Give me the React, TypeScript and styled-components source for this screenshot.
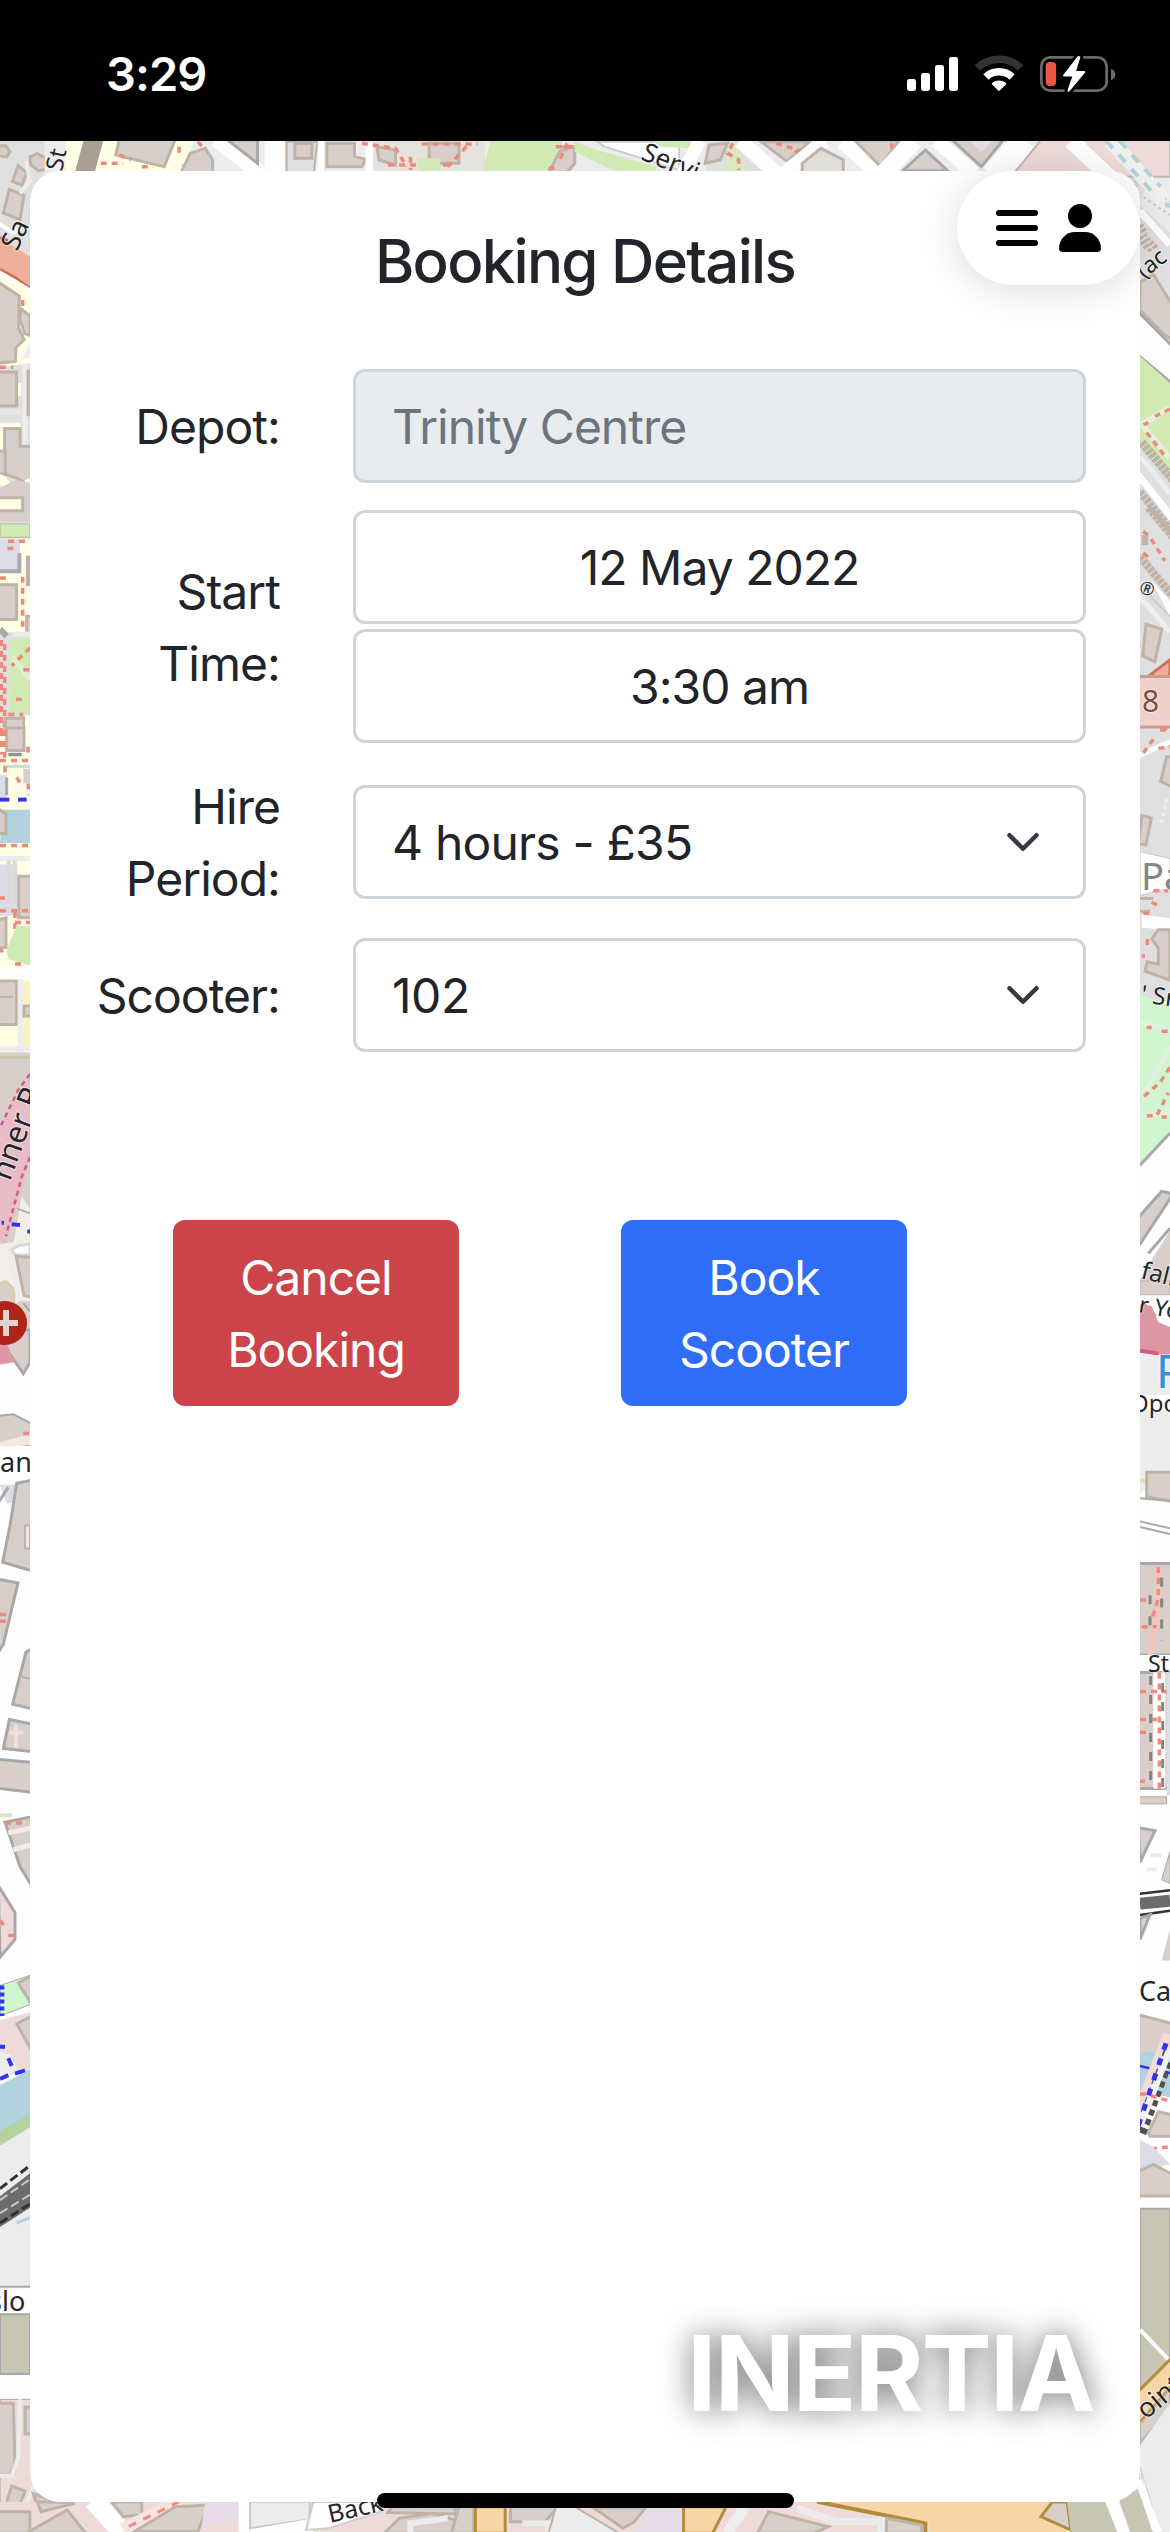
import React from 'react';
import styled, { createGlobalStyle } from 'styled-components';

const GlobalStyle = createGlobalStyle`
  *, *::before, *::after { box-sizing: border-box; }
  html, body { margin: 0; padding: 0; background: #000; }
  body { font-family: Inter, "Liberation Sans", sans-serif; color: #212529; -webkit-font-smoothing: antialiased; }
`;

/* ---------- map artwork ---------- */

const C = {
  land: '#dfdfdf', light: '#ececec', block: '#d8cfca', edge: '#bfb3a8', grey: '#a9a8a6', yellow: '#ffffe6',
  green: '#d1e9b3', mint: '#cff6cf', water: '#b2d2de', salmon: '#eeb09d', retail: '#eedad9', pinkRoad: '#e8bcc7',
  rose: '#dd97a3', roseEdge: '#d35c86', path: '#ee897b', cycle: '#3232f2', lilac: '#dcdce6', cream: '#f1eee9',
  olive: '#c6c6b3', orange: '#f6d6a7', orangeEdge: '#b28c3c', purple: '#e8dbe8', white: '#fefefe', dark: '#6c6c6c',
};

type Shape = { d: string; f?: string; s?: string; w?: number; dash?: string };
const area = (d: string, f: string, s?: string, w = 3): Shape => ({ d: `M${d}Z`, f, s, w });
const line = (d: string, s: string, w = 3, dash?: string): Shape => ({ d: `M${d}`, s, w, dash });
const foot = (d: string) => line(d, C.path, 3.5, '6 5');

type Sheet = { x: number; y: number; sx: number; sy: number; shapes: Shape[] };

const sheets: Sheet[] = [
  { x: 0, y: 130, sx: 3, sy: 2.529, shapes: [
    area('0 25H180V1568H0', C.land),
    area('90 68L112 60 155 80 150 98 115 103 92 88', C.block, C.edge),
    area('-4 40L18 40 30 55 20 68 -4 65', C.block, C.edge),
    area('54 90L80 108 66 140 38 130', C.block, C.edge), area('28 150L72 165 60 226 10 210', C.block, C.edge),
    line('78 80L90 130 60 160', C.light, 4), line('-5 235L40 260 62 245', C.white, 4),
    area('-5 270L90 320V400L0 355', C.salmon), line('0 272L24 280', '#cf6a4e', 3), line('0 352L50 375 90 400', '#cf6a4e', 2.5),
    area('0 355L90 400V590L0 600', C.yellow), line('0 364L45 382 90 405', C.white, 3),
    area('-5 385L58 420 56 500 72 530 48 550 46 585 -5 590', C.block, C.edge),
    area('62 452L90 470V520L75 515 60 480', C.block, C.edge), foot('68 430V450'),
    area('90 540V575L65 582', C.light), foot('0 600H40'), area('-5 612H50V698H-5', C.block, C.edge),
    area('54 640H64V672H54', C.yellow), line('75 590V800', C.light, 5), area('84 610H94V720H84', C.block, C.edge),
    line('0 714H64', '#e6e6e6', 6), area('0 740H62V752H0', C.yellow), area('0 755H16V820H0', C.yellow),
    area('14 755H60V800H95V895L70 890 50 880 14 870', C.block, C.edge), area('-5 812H16V870H-5', C.block, C.edge),
    area('0 870L18 878 28 890 20 900 0 900', C.yellow), area('75 885L90 880V895H75', C.yellow),
    area('0 905L50 885 90 892V990H0', C.block), area('-5 930H68V963H-5', C.yellow, C.edge),
    area('0 996H90V1030H0', C.green, C.edge, 1), area('0 1034H90V1270H0', C.yellow),
    area('0 1035H60V1115H0', C.lilac), line('0 1116H58V1070', '#a7aab6', 4), foot('24 1040H90'), foot('22 1058H45'),
    area('82 1080H90V1150H82', C.block, C.edge), foot('0 1133H30'), area('-5 1150H50V1238H-5', C.block, C.edge),
    foot('68 1130V1260'), area('80 1230H95V1275H80', C.block, C.edge), line('0 1262L20 1280', C.grey, 6),
    line('40 1275H90', C.light, 5), area('26 1290L90 1285V1475H30', C.green), line('35 1330L90 1390', '#e2eed2', 5),
    foot('90 1310L35 1355'), foot('70 1365H90'), foot('48 1440H74'), foot('25 1478H70'),
    foot('4 1290V1568'), foot('14 1300V1568'), area('16 1488H72V1540H16', C.block, C.edge), area('75 1480H90V1568H75', C.yellow),
    line('20 1550H90', '#dcdcdc', 5),
  ] },
  { x: 0, y: 730, sx: 3, sy: 2.529, shapes: [
    area('0 0H90V605H0', C.yellow), area('20 -5H72V52H20', C.block, C.edge), foot('5 0V62'), foot('14 0V70'), foot('84 42V60'),
    line('25 62H65', '#929292', 3.5), foot('0 77H85'), line('10 92H90', '#d4d4d4', 3), foot('15 92V115'), foot('50 120L65 140'),
    area('70 98H90V135H70', C.block), foot('85 135V165'), area('0 112L20 115V170H0', C.lilac), line('20 120V165', C.grey, 3),
    line('0 176H28', C.cycle, 4), line('54 176H80', C.cycle, 4), area('8 202H90V286H0', C.water), area('-5 200L18 212V262H-5', C.block, C.edge),
    foot('0 292H90'), line('0 325H90', C.light, 5), area('0 340H52V470H0', C.lilac), line('26 330V440M44 330V440', '#dadada', 4),
    area('56 370H95V475H56', C.block, C.edge), foot('0 425H15M0 457H90M45 460V555M45 487H90'),
    area('50 495H90V595L25 580 20 555', C.green), foot('5 520V575M45 592H75'), area('-5 480L18 475V550H-5', C.block, C.edge),
    area('0 602H90V630H0', C.white), area('0 630H90V828H0', C.yellow), area('-5 635H50V745H-5', C.block, C.edge), line('0 675H40', C.edge, 2), line('62 630V815', C.light, 6),
    area('72 635H90V695H72', '#f8f5ba'), area('72 698H95V724H72', C.block, C.edge), area('72 728H90V800H72', '#f8f5ba'), line('0 806H90', '#ebebeb', 5),
    area('0 815H90V1310H0', C.block), line('0 828H90', '#cec5a6', 3),
    area('90 866L0 1005V1290L18 1300 90 1080', C.pinkRoad), line('90 870L55 910 0 1005M90 1080L65 1130 18 1280', C.roseEdge, 2.5, '5 4'),
    area('65 1180L90 1210V1300H40', C.cream), line('50 1210L90 1222', C.edge, 2), line('5 1246H12M35 1250L60 1252M82 1268H90', C.cycle, 4),
    area('0 1300L90 1290V1568H0', C.cream), area('55 1304L90 1300V1328H45L35 1314', C.white, '#d8d8d8'),
    area('-5 1400L18 1396 42 1415 40 1480 -5 1485', C.block, '#d2cdaf'), area('48 1330L95 1334V1435L72 1430', C.block, C.edge),
    line('36 1350L52 1425 75 1465', C.light, 4), area('55 1445H90V1568H0V1500', C.block), line('70 1450L90 1470', C.grey, 2),
  ] },
  { x: 0, y: 1330, sx: 3, sy: 1.3045, shapes: [
    area('0 55H90V1400H0', C.white), area('0 0H90V42L70 57 20 25 0 30', C.block, C.grey), area('0 0H70L20 18 45 42 0 45', C.rose),
    area('-5 112L40 110 95 122V150L-5 150', C.block, C.grey, 2), area('0 146L90 136V150L0 154', '#f4e6e1'), foot('70 135H90'),
    area('0 152H90V200H0', C.white),
    area('0 202H70V226H20', C.lilac), area('50 200L95 196V314L8 303 30 255', C.block, C.grey), line('-5 225L25 205', C.grey, 3),
    area('75 255H90V285H75', '#f4e6e1', C.edge, 2), area('-5 325L54 330 10 410 -5 420', C.block, C.grey), foot('0 371H25M0 380H20'),
    area('78 420L95 416V494L38 488', C.block, C.grey), line('60 452L90 455', C.edge, 2),
    area('28 508L95 514V550L10 546', C.block, C.grey), line('28 525H70M48 515V545', '#f3dedb', 4),
    area('-5 560L95 564V603L-5 598', C.block, C.grey), line('0 633H35', '#d7e6c4', 4), area('15 642L95 635V725L60 700', C.block, C.grey),
    foot('15 643H80'), line('25 656L90 650M40 678L90 672', '#f6eae7', 5), area('-5 725L45 760V795L0 818', C.retail, C.grey), foot('0 770L20 781M25 790H45'),
    area('0 855L90 842V880L0 895', C.mint, C.grey, 1), area('55 852L95 842V880', C.block, C.edge), line('4 855V895', C.cycle, 6, '4 3'),
    area('0 900L90 890V970H0', C.retail), area('50 905L95 895V940', C.block, C.edge), area('0 940L30 945 60 970 0 975', C.light),
    line('0 935H15M25 950L35 960M0 977L25 972M45 970L75 966', C.cycle, 4), area('0 985L90 965V1025L0 1048', C.water), area('0 1045L90 1023V1043L0 1064', '#b5d1a0'),
    area('0 1064L90 1040V1250H0', C.light), area('0 1130L90 1100V1145L0 1170', C.dark),
    line('0 1120L90 1090M0 1165L90 1140', '#303030', 3, '9 4'), line('0 1135L90 1108M0 1152L90 1128', '#c8c8c8', 2, '9 4'), line('50 1165L90 1158', C.water, 3),
    line('0 1248H90', C.grey, 2), area('0 1284H90V1362H0', C.olive, C.grey, 2), area('0 1395H180V1568H0', C.retail, C.grey, 1),
    area('-5 1400H40L45 1480 30 1494 -5 1494', C.block, C.edge), line('60 1395L55 1470 35 1495 0 1495', C.light, 4), area('75 1405H95V1440H75', C.block, C.edge),
    area('35 1508L75 1515 50 1543 18 1532', C.block, C.edge), line('105 1505L40 1568', C.light, 4), area('100 1518L175 1530 120 1545', C.block, C.edge),
  ] },
  { x: 1110, y: 130, sx: 3, sy: 2.529, shapes: [
    area('0 25H180V1568H0', C.land), area('60 25H180V95L130 125', C.retail, '#d7cbc6', 2), area('145 20H185V70', C.block, C.edge),
    area('0 28H60L115 130 90 150', C.retail), line('5 25L105 135', '#eef0ee', 9), line('0 40L90 155M38 30L115 120', C.water, 4, '7 7'),
    area('110 125L180 95V260L90 190', C.light), line('100 170L180 215M115 150L180 180', '#cccccc', 2, '3 3'), line('165 190H180', C.water, 5),
    line('90 205L180 290', C.white, 7), line('90 240L120 280 140 300M90 270L120 310', C.edge, 6, '3 2'), line('112 260L150 290M90 300L130 320', C.retail, 4),
    area('155 350L180 320V380', C.purple), area('90 385L130 365 185 440V530L160 515 90 455', C.block, C.edge),
    area('85 460L185 545V640L85 570', C.white, C.grey), area('90 572L180 640V890L90 785', C.green), line('180 702L95 745 180 830', '#e4eed8', 6),
    foot('180 706L135 724M115 740L100 745M110 765L170 830'), line('95 790L190 885', C.edge, 9, '4 1'), line('90 825L180 920', C.light, 5),
    line('85 872L190 985', C.white, 7), line('90 915L190 1020M115 955L190 1030', C.edge, 8, '4 1'), foot('100 1015L120 1030 165 1090M100 1070L115 1080'),
    line('90 1080L190 1180', C.edge, 8, '4 1'), area('95 1025H115V1050H95', C.edge), area('125 1140L180 1190V1230', C.white),
    line('90 1180L180 1270', '#eeeeee', 5), line('110 1170L180 1230', '#cccccc', 2), area('108 1250L155 1262 135 1345 98 1330', C.block, C.edge),
    area('118 1380L180 1340V1385', C.salmon, '#cb7356'), area('85 1382H185V1510H85', '#efd1cb', '#cf9d8f'),
    line('90 1550L180 1520', C.white, 4), foot('155 1518H180M90 1560L140 1540 180 1535'),
  ] },
  { x: 1110, y: 730, sx: 3, sy: 2.178, shapes: [
    area('90 0H180V590H90', C.land), line('90 55L180 25', C.white, 5), foot('100 50L130 20M150 0H180M145 40L180 36'),
    area('170 58L190 60V125L152 112', C.block, C.edge), line('172 150L150 210', C.light, 4, '4 3'), area('96 186L124 192 108 250 85 248', C.block, C.edge),
    area('90 265L180 280V345L90 360', C.white, '#c9c9c9', 1), line('90 367H130M90 395H120', C.edge, 3), foot('130 350H175M125 375L150 385M100 400H120'),
    area('95 402L180 410V436L95 430', C.white), area('125 455L145 435H180V545L105 525 112 505 145 510V475', C.block, C.edge), foot('112 455V475M95 492H105'),
    area('90 575L180 600V875L90 948', C.mint), line('90 635L180 655M180 690L90 810M180 830L90 840', '#e2f1df', 5),
    foot('110 648H125M155 656H180M180 735L150 768 90 805M110 840H140L175 790M155 843H170'), line('90 948L180 878', C.grey, 3),
    area('85 1062L155 1005 190 1010 85 1125', C.block, C.grey), area('180 1090V1210L90 1230V1195', C.block), line('115 1140L180 1085', C.grey, 3),
    area('90 1200H180V1230H90', C.block, C.edge, 1), area('90 1238H180V1300H90', C.white), foot('100 1250L140 1280'),
    area('90 1250L125 1255 145 1290 180 1300V1365L90 1353', C.rose), line('90 1352L145 1358', C.roseEdge, 4), area('90 1358L180 1365V1568H90', C.light),
    area('90 1448H180V1482H90', C.white),
  ] },
  { x: 1110, y: 1430, sx: 3, sy: 1.423, shapes: [
    area('90 0H180V1568H90', C.white), area('90 0H180V60L90 90', C.light), line('90 72H110', C.green, 3), area('110 60H190V102L110 95', C.block, C.edge),
    line('90 97L180 101M90 130L180 140M90 138L180 148', C.grey, 2), area('85 190H190V320H85', C.block, C.grey), line('145 195V250L120 320', '#f0c6bd', 7), foot('145 195V240L125 270M90 242H115M95 280H140'),
    line('155 210V300M120 235V290', '#848484', 3, '9 12'), area('85 320H190V345H85', C.white), area('85 345H190V510H85', C.block, C.grey), line('148 345V510', '#ffffff', 12), foot('148 345V510M90 372H180M90 412H155M90 430H120M90 500H105'),
    line('122 350V510M158 360V510', '#858580', 3, '9 10'), area('170 345H180V520H170', C.lilac), area('85 522H170V532H85', C.block, C.grey, 1),
    area('85 566L135 570 90 615', C.block, C.grey), line('120 605H155M110 625H140', C.light, 4), area('180 600V645L155 640', C.block, C.grey, 1),
    area('90 660L180 655V695H90', C.white), line('90 674L180 670', C.dark, 12), line('90 660L180 655M90 690L180 684', '#333333', 2.5),
    area('90 695L120 690 90 725', C.block, C.grey), area('180 710V755L155 755', C.block), area('85 832L190 845V905H85', C.block, C.edge),
    area('90 885H180V950L90 940', C.water), line('90 905L180 915', C.cycle, 2.5), line('90 970L180 860', '#f0d9d7', 14), line('90 1000L180 885', '#505050', 13, '6 4'), line('90 990L180 880', '#f2f2f2', 7), line('85 990L170 870', C.cycle, 5, '7 9'),
    foot('90 945H105L180 955M90 1025L180 1020'), area('115 1000L145 970 190 975V1005H120', C.block, C.edge), area('90 1010L130 1020 180 1045 90 1055', C.lilac),
    area('85 1055L130 1045 190 1060V1090H85', C.block, C.edge), area('90 1108H180V1568H90', C.olive, C.grey, 2), line('90 1280L180 1325', C.white, 4),
    area('85 1368L190 1318V1358L85 1415', C.orange, C.orangeEdge), area('90 1415L180 1365V1395L90 1440', C.block, C.edge, 2), area('90 1445L180 1385V1568H130L90 1500', C.light),
    area('90 1475L150 1568H0V1500H100', C.white, '#cccccc', 1), area('0 1500H60L120 1568H40L15 1525', C.olive),
  ] },
  { x: 0, y: 0, sx: 1.34, sy: 3, shapes: [
    area('60 422H1568V530H60', C.light), area('88 422H260L240 530H88', C.yellow), line('126 415L112 530', '#ab9e94', 19),
    area('160 418H235L220 500 155 465', C.block, C.edge), foot('240 440V460M265 425L275 450 245 500M160 465L175 480M135 490H165M190 500H205'),
    area('255 460L275 445 285 480V530H240', C.block, C.edge), line('290 418L350 520', C.white, 16), area('305 420H345V490', C.block, C.grey),
    line('368 422V530', C.white, 20), area('384 425H425L420 530H384', C.land, C.edge, 2), area('395 430H418V475H395', C.block, C.edge),
    line('430 422V530', C.white, 6), area('438 430H475V470L490 478 485 500H438', C.block, C.edge), line('496 430V530', C.white, 9),
    area('500 422H650V530H500', '#e6e2dc'), area('505 440L530 450V495L508 480', C.block, C.edge), area('575 430H615V490H575', C.block, C.edge),
    foot('485 430L530 445 545 500M520 495H600M550 470V510M565 432H640M625 440L600 500'), area('560 475H590V530H560', C.green),
    area('745 440H770V490L755 530H720', C.block, C.edge), area('658 415H755L740 530H645', C.green), area('750 455L770 440V490L755 530H732', C.block, C.edge), foot('745 440H770M760 430L750 480M735 505H745'),
    area('770 425L800 450 880 500 875 530H840L770 455', C.green), area('800 425H910V510L810 440', C.white, '#cccccc', 2), area('875 422H925V445L885 440', C.green),
    line('938 422L915 520', C.white, 13), area('950 422H1010L1025 530H945', C.land), area('950 435L975 430 965 480 945 490', C.block, C.edge), area('975 445L990 430 1000 520H970', '#d9e8c3'),
    foot('982 430L975 460 990 480V510M1000 440L1015 490'), line('992 422L1045 530', C.white, 15), area('1020 425H1085L1055 485', C.block, C.edge), foot('1040 430L1070 450 1060 470M1090 495L1130 480 1120 510'),
    line('1105 422L1045 530', C.white, 14), area('1075 490L1100 445 1130 480V530H1075', '#e0dcd8', C.edge), line('1130 422L1185 530', C.white, 18),
    area('1145 420H1205L1180 500', C.block, C.edge), foot('1195 430V445'), line('1225 422L1180 530', C.white, 18), area('1210 512L1240 450 1270 512', C.block, C.grey), line('1255 422L1305 520', C.white, 14),
    area('1275 418H1345L1315 500', C.block, C.grey), area('1300 422H1330L1315 455', C.purple), line('1375 422L1330 530', C.white, 26), area('1395 420H1568V530H1355', C.retail, '#bdb6b2', 2),
    line('1435 422L1500 560', C.white, 16), line('1488 422L1560 600', '#eff1ef', 15), line('1482 422L1550 590M1500 422L1555 560', C.water, 4, '10 9'),
  ] },
  { x: 0, y: 2440, sx: 1.34, sy: 3, shapes: [
    area('0 185H1430V280H0', C.retail), area('50 186H80L100 190 55 215', C.block, C.edge), area('-5 215H40V280H-5', C.block, C.edge), area('90 210L115 280H35', C.block, C.edge),
    line('125 180L165 280', C.white, 20), area('150 186H190V225L165 230', C.block, C.edge), line('240 185L165 270', '#f5e3df', 14), line('240 185L165 268', C.path, 3, '8 8'),
    area('235 200L280 195 265 275H180', C.block, C.edge), area('275 186H322V240L270 260', C.purple), line('327 180V280', C.white, 11), area('335 185H415V238L335 265', C.light, '#c8c8c8', 2), area('335 268L420 235V280H335', C.white),
    area('420 186L505 186 510 215 440 265 410 270', C.white, '#cccccc', 2), area('525 200H610V222L520 218', C.block, C.edge), area('535 235L580 220 610 240V280H515', C.block, C.edge), line('550 280V250L600 235', C.light, 6),
    area('615 200H635V280H605', C.block, C.edge), area('637 200H677V280H637', C.orange, C.orangeEdge), area('684 200H748L730 245H684', C.block, C.edge), line('700 250H735V280', C.light, 6),
    area('745 200H770L830 280H735', C.light, C.edge, 2), area('795 203H865L850 245 835 265', C.block, C.edge), area('868 200H915V280H850', C.purple), area('916 200H973L955 280H916', C.orange, C.orangeEdge),
    line('998 200L975 280', '#eeeeee', 11), area('1030 215L1110 260 1090 280H1015', C.block, C.edge), line('1068 205L1120 245H1180V280M1182 225V250', '#ececec', 7),
    area('1090 186H1430V280H1245V250', C.orange), line('1095 185L1240 250V280', C.orangeEdge, 4), area('1188 235L1235 255V280H1188', C.block, C.edge),
    area('1410 186L1430 186 1435 270 1395 230', C.block, C.orangeEdge), area('1430 186H1490L1505 280H1435', C.olive), line('1490 180L1508 280', C.white, 14), area('1500 186L1525 145 1545 280H1515', C.olive), line('1525 120L1553 280', C.white, 7),
  ] },
];

const mapLabels: { x: number; y: number; r?: number; size: number; text: string; fill?: string }[] = [
  { x: 62, y: 172, r: -78, size: 24, text: 'St' },
  { x: 17, y: 252, r: -65, size: 27, text: 'Sa' },
  { x: 10, y: 1182, r: -70, size: 31, text: 'nner R' },
  { x: 0, y: 1472, size: 27, text: 'an' },
  { x: -11, y: 2311, size: 27, text: 'slo' },
  { x: 640, y: 159, r: 22, size: 26, text: 'Servi' },
  { x: 1144, y: 279, r: -38, size: 23, text: '(ac' },
  { x: 1138, y: 592, r: 20, size: 18, text: '®' },
  { x: 1142, y: 712, size: 30, text: '8', fill: '#7c4d40' },
  { x: 1141, y: 890, size: 38, text: 'Pa', fill: '#858585' },
  { x: 1140, y: 1002, r: 8, size: 24, text: "' Sn" },
  { x: 1140, y: 1278, r: 14, size: 24, text: 'fall' },
  { x: 1138, y: 1312, r: 10, size: 23, text: 'r Yo' },
  { x: 1156, y: 1388, size: 46, text: 'P', fill: '#3f8ed4' },
  { x: 1130, y: 1412, size: 24, text: 'Opo' },
  { x: 1148, y: 1672, size: 23, text: 'St' },
  { x: 1139, y: 2001, size: 27, text: 'Ca' },
  { x: 1146, y: 2420, r: -40, size: 27, text: 'oint' },
  { x: 330, y: 2523, r: -13, size: 25, text: 'Back' },
];

const MapSvg = styled.svg`
  position: absolute;
  inset: 0;
  width: 100%;
  height: 100%;
  display: block;
`;

const MapText = styled.text`
  font-family: "Noto Sans", sans-serif;
  fill: ${(p) => p.fill || '#262626'};
  stroke: #fff;
  stroke-width: 2px;
  stroke-opacity: 0.5;
  paint-order: stroke;
`;

function StreetMap() {
  return (
    <MapSvg viewBox="0 141 1170 2391" aria-hidden="true">
      {sheets.map((sheet, i) => (
        <g key={i} transform={`translate(${sheet.x} ${sheet.y}) scale(${1 / sheet.sx} ${1 / sheet.sy})`}>
          {sheet.shapes.map((s, j) => (
            <path key={j} d={s.d} fill={s.f || 'none'} stroke={s.s} strokeWidth={s.w} strokeDasharray={s.dash} vectorEffect="non-scaling-stroke" />
          ))}
        </g>
      ))}
      <circle cx="5" cy="1323" r="22" fill="#b02318" />
      <path d="M6 1310v26M-8 1323h26" stroke="#ddd5d0" strokeWidth="6" />
      {mapLabels.map((l) => (
        <MapText key={l.text + l.y} x={l.x} y={l.y} fontSize={l.size} fill={l.fill} transform={`rotate(${l.r || 0} ${l.x} ${l.y})`}>
          {l.text}
        </MapText>
      ))}
    </MapSvg>
  );
}

/* ---------- page ---------- */

const Screen = styled.div`
  position: relative;
  display: flex;
  flex-direction: column;
  width: 1170px;
  height: 2532px;
  overflow: hidden;
`;

const StatusBar = styled.header`
  display: flex;
  justify-content: space-between;
  flex: 0 0 141px;
  padding: 45px 54px 0 106px;
  background: #000;
  color: #fff;
`;

const Clock = styled.time`
  font-size: 47px;
  font-weight: 600;
  line-height: 58px;
  letter-spacing: -1px;
`;

const StatusIcons = styled.svg`
  width: 210px;
  height: 40px;
  margin-top: 9px;
`;

const MapArea = styled.main`
  position: relative;
  flex: 1;
  display: flex;
  padding: 30px;
  background: #fefefe;
`;

const Card = styled.section`
  position: relative;
  flex: 1;
  padding: 54px 54px 0 0;
  border-radius: 30px;
  background: #fff;
`;

const Title = styled.h1`
  margin: 0 -54px 72px 0;
  font-size: 60px;
  font-weight: 500;
  line-height: 72px;
  letter-spacing: -1.7px;
  text-align: center;
`;

const Row = styled.div<{ $after?: number }>`
  display: grid;
  grid-template-columns: 250px 733px;
  column-gap: 73px;
  align-items: center;
  margin-bottom: ${(p) => p.$after ?? 27}px;
`;

const Label = styled.label`
  position: relative;
  top: 1px;
  padding-left: 40px;
  font-size: 48px;
  line-height: 72px;
  letter-spacing: -0.95px;
  text-align: right;
`;

const Fields = styled.div`
  display: grid;
  gap: 5px;
`;

const Field = styled.div<{ $disabled?: boolean; $center?: boolean; $tracking?: number }>`
  display: flex;
  align-items: center;
  justify-content: ${(p) => (p.$center ? 'center' : 'space-between')};
  height: 114px;
  padding: 2px ${(p) => (p.$center ? 36 : 42)}px 0 36px;
  border: 3px solid #ced4da;
  border-radius: 12px;
  background: ${(p) => (p.$disabled ? '#e9ecef' : '#fff')};
  color: ${(p) => (p.$disabled ? '#6c757d' : '#212529')};
  font-size: 48px;
  line-height: 72px;
  letter-spacing: ${(p) => p.$tracking ?? -1}px;
`;

const Chevron = styled.svg`
  width: 36px;
  height: 36px;
  margin-bottom: 2px;
`;

const Actions = styled.div`
  display: flex;
  gap: 162px;
  margin: 168px 0 0 143px;
`;

const ActionButton = styled.button<{ $tone: 'danger' | 'primary' }>`
  width: 286px;
  height: 186px;
  padding: 20px 36px 18px;
  border: 0;
  border-radius: 12px;
  background: ${(p) => (p.$tone === 'danger' ? '#cb444a' : '#306df6')};
  color: #fff;
  font-family: inherit;
  font-size: 48px;
  line-height: 72px;
  letter-spacing: -1px;
`;

const MenuPill = styled.nav`
  position: absolute;
  top: 30px;
  right: 30px;
  display: flex;
  align-items: center;
  width: 183px;
  height: 114px;
  padding-left: 39px;
  border-radius: 57px;
  background: #fff;
  box-shadow: 0 4px 42px rgba(0, 0, 0, 0.14);
`;

const Brand = styled.div`
  position: absolute;
  right: 76px;
  bottom: 87px;
  color: #fff;
  font-size: 105px;
  font-weight: 700;
  line-height: 144px;
  letter-spacing: -1.9px;
  text-shadow: 0 0 30px rgba(0, 0, 0, 0.6);
`;

const HomeIndicator = styled.div`
  position: absolute;
  left: 377px;
  bottom: 24px;
  width: 417px;
  height: 15px;
  border-radius: 8px;
  background: #000;
`;

function Arrow() {
  return (
    <Chevron viewBox="0 0 16 16" fill="none" stroke="#343a40" strokeWidth="2" strokeLinecap="round" strokeLinejoin="round">
      <path d="M2 5l6 6 6-6" />
    </Chevron>
  );
}

export default function App() {
  return (
    <>
      <GlobalStyle />
      <Screen>
        <StatusBar>
          <Clock>3:29</Clock>
          <StatusIcons viewBox="906 54 210 40" fill="#fff">
            <rect x="907" y="79" width="9" height="12" rx="2.4" />
            <rect x="921" y="73" width="9" height="18" rx="2.4" />
            <rect x="935" y="65" width="9" height="26" rx="2.4" />
            <rect x="949" y="57" width="9" height="34" rx="2.4" />
            <path d="M977.3 67.8a31.5 31.5 0 0 1 43.4 0" fill="none" stroke="#333" strokeWidth="7.5" />
            <path d="M985.9 77a19 19 0 0 1 26.2 0" fill="none" stroke="#fff" strokeWidth="7.5" />
            <path d="M999 91.2l-6.9-6.8q-.8-.9.2-1.6a11.5 11.5 0 0 1 13.4 0q1 .7.2 1.6z" />
            <rect x="1041.3" y="57.3" width="65.3" height="33.4" rx="9" fill="none" stroke="#6b6b6b" strokeWidth="2.7" />
            <path d="M1111 69a5.7 5.7 0 0 1 0 11z" fill="#6b6b6b" />
            <rect x="1045.7" y="62" width="10.4" height="24" rx="4" fill="#eb5545" />
            <path d="M1077.5 56.5l-14.3 18.5q-.7 1.5.8 1.5h8.3l-4.7 13.5q-.2 2.700 1.700 1.500l15.800-19q.7-1.600-.8-1.600h-8.200l4.200-13.300q-.3-2.700-2.800-1.100z" stroke="#000" strokeWidth="6" paintOrder="stroke" />
          </StatusIcons>
        </StatusBar>
        <MapArea>
          <StreetMap />
          <Card>
            <Title>Booking Details</Title>
            <Row>
              <Label>Depot:</Label>
              <Field $disabled>Trinity Centre</Field>
            </Row>
            <Row>
              <Label>Start Time:</Label>
              <Fields>
                <Field $center>12 May 2022</Field>
                <Field $center>3:30 am</Field>
              </Fields>
            </Row>
            <Row $after={24}>
              <Label>Hire Period:</Label>
              <Field $tracking={-0.8}>4 hours - £35<Arrow /></Field>
            </Row>
            <Row $after={0}>
              <Label>Scooter:</Label>
              <Field $tracking={-0.4}>102<Arrow /></Field>
            </Row>
            <Actions>
              <ActionButton $tone="danger">Cancel Booking</ActionButton>
              <ActionButton $tone="primary">Book Scooter</ActionButton>
            </Actions>
          </Card>
          <MenuPill>
            <svg width="105" height="48" viewBox="996 204 105 48" aria-label="Menu">
              <path d="M999 213h36M999 228h36M999 243h36" stroke="#000" strokeWidth="6" strokeLinecap="round" />
              <circle cx="1080" cy="216" r="12" />
              <path d="M1059 248.5c0-9 7-16.5 16-16.5h10c9 0 16 7.5 16 16.5 0 2-1.5 3.5-3.5 3.5h-35c-2 0-3.5-1.5-3.5-3.5z" />
            </svg>
          </MenuPill>
          <Brand>INERTIA</Brand>
        </MapArea>
        <HomeIndicator />
      </Screen>
    </>
  );
}
